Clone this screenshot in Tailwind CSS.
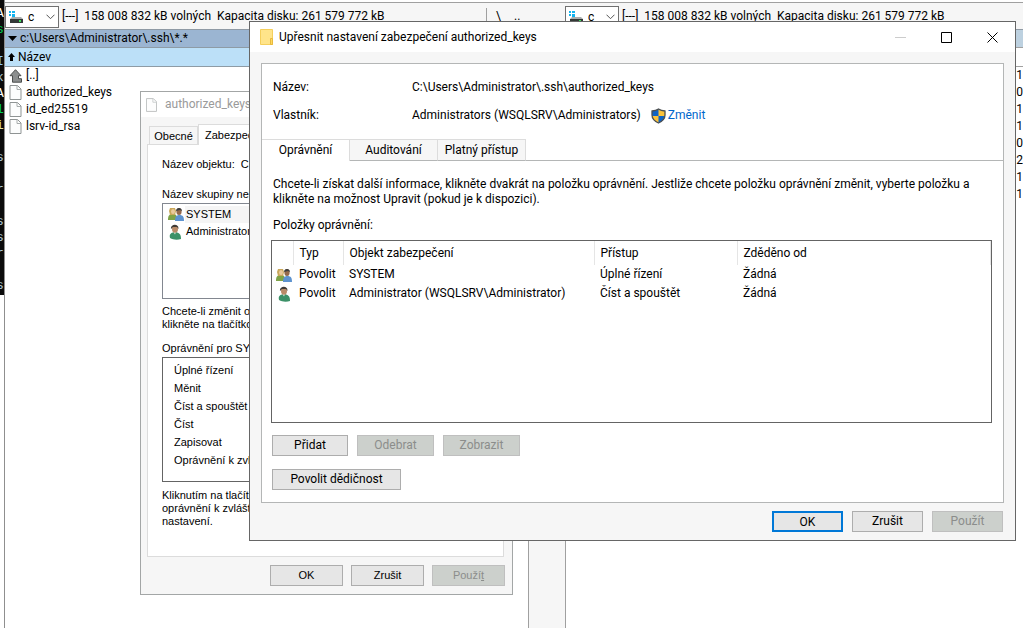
<!DOCTYPE html>
<html lang="cs">
<head>
  <meta charset="UTF-8" />
  <meta name="viewport" content="width=device-width, initial-scale=1.0"/>
  <title>Upřesnit nastavení zabezpečení authorized_keys</title>
  <script src="https://cdn.jsdelivr.net/npm/@tailwindcss/browser@4"></script>
</head>
<body class="relative flex h-screen overflow-hidden bg-white text-black text-[12px] leading-[17px] font-['Roboto','Open_Sans',sans-serif]">

  <svg class="hidden">
    <symbol id="drive" viewBox="0 0 16 14">
      <path fill="#12b4f0" d="M1 1h2v2H1zM4 1h3v2H4zM1 4h2v2H1zM4 4h3v3H4z"/>
      <path fill="#a9adad" d="M4 7h9l2 2H2z"/>
      <path fill="#333837" d="M2 9h13v4H2z"/>
      <path fill="#3fe05a" d="M11 10h2v2h-2z"/>
    </symbol>
    <symbol id="file" viewBox="0 0 12 15">
      <path fill="#fcfdfd" stroke="#8f9494" d="M.5.5h7.500l3.500 3.500v10.500H.5z"/>
      <path fill="none" stroke="#a8adad" d="M7.500.5v4h4"/>
    </symbol>
    <symbol id="group" viewBox="0 0 16 14">
      <path fill="#7fa348" d="M0 13c0-4 1-6 5-6s4 3 4 6z"/>
      <path fill="#c9a75a" d="M2 1h5l1 3-1 4H2L1 4z"/>
      <ellipse cx="5" cy="4.500" rx="2" ry="2.500" fill="#e9c99c"/>
      <path fill="#5e93cf" d="M7 14c0-4 1-6 4.500-6s4.500 2 4.500 6z"/>
      <ellipse cx="11" cy="4.500" rx="2.600" ry="3.500" fill="#94694c"/>
      <path fill="#3c3d3d" d="M8 4c0-4 6-4 6 0l-2-1z"/>
    </symbol>
    <symbol id="user" viewBox="0 0 13 16">
      <path fill="#3c9168" d="M1 14c-1-4 1-5 4-6 5 0 7 2 7 7-3 1-8 1-11-1z"/>
      <path fill="#e6efe6" d="M4.500 8h2.500L6 10.500z"/>
      <ellipse cx="6" cy="5" rx="3" ry="3.800" fill="#b98b68"/>
      <path fill="#3f3a35" d="M2 5C1 0 10-1 9.500 5L8 3 4 3z"/>
    </symbol>
  </svg>

  <!-- terminal edge -->
  <aside class="h-[295px] w-1 shrink-0 overflow-hidden bg-[#0b0b0b] pt-[6px]">
    <pre class="-ml-1 font-['Liberation_Mono',monospace] text-[13px] leading-[16px] text-[#a9c4d4]"><span class="text-white">A</span>
<span class="text-green-500">s</span>

<span class="text-[#8cc8ff]">I</span>
k
<span class="text-white">A</span>
<span class="text-green-500">1</span>
<span class="text-[#e0e0a0]">i</span>

s

r

s
s
r

s</pre>
  </aside>

  <!-- file manager -->
  <div class="flex min-w-0 flex-1 flex-col border-l border-[#8f8f8f]">
    <div class="mt-[7px] flex h-[22px] shrink-0 bg-[#f6f6f6] shadow-[0_-4px_0_#f6f6f6,0_-5px_0_#a0a0a0]">
      <div class="flex w-[560px] shrink-0 items-center gap-[3px]">
        <label class="relative -mt-[3px] block">
          <svg class="absolute left-[3px] top-1 h-[14px] w-4"><use href="#drive"/></svg>
          <select aria-label="Disk" class="h-[22px] w-[54px] appearance-none border border-[#707070] bg-white pl-[22px] leading-[20px]"><option>c</option></select>
          <svg class="absolute right-1 top-2 h-[6px] w-[9px]" viewBox="0 0 9 6"><path fill="none" stroke="#555" d="M.5.7l4 4 4-4"/></svg>
        </label>
        <span class="-mt-1 whitespace-pre">[---]  158 008 832 kB volných  Kapacita disku: 261 579 772 kB</span>
        <div class="-mt-1 ml-auto flex w-[79px] gap-2 border-l border-[#a0a0a0] pl-[9px]">
          <button class="w-[10px] text-left">\</button>
          <button>..</button>
        </div>
      </div>
      <div class="flex items-center gap-[3px]">
        <label class="relative -mt-[3px] block">
          <svg class="absolute left-[3px] top-1 h-[14px] w-4"><use href="#drive"/></svg>
          <select aria-label="Disk vpravo" class="h-[22px] w-[54px] appearance-none border border-[#707070] bg-white pl-[22px] leading-[20px]"><option>c</option></select>
          <svg class="absolute right-1 top-2 h-[6px] w-[9px]" viewBox="0 0 9 6"><path fill="none" stroke="#555" d="M.5.7l4 4 4-4"/></svg>
        </label>
        <span class="-mt-1 whitespace-pre">[---]  158 008 832 kB volných  Kapacita disku: 261 579 772 kB</span>
      </div>
    </div>

    <div class="flex min-h-0 flex-1">
      <section class="w-[523px] shrink-0">
        <div class="flex h-[18px] items-center gap-[3px] border-t border-[#8f9aa5] bg-[#9bb5d2] pl-[3px]">
          <svg class="h-[5px] w-[9px]" viewBox="0 0 9 5"><path d="M0 0h9L4.500 5z"/></svg>
          c:\Users\Administrator\.ssh\*.*
        </div>
        <div class="flex h-5 items-center gap-[3px] border-y border-[#8e9ba5] bg-[#bce0f8] pl-[3px]">
          <svg class="h-2 w-[7px]" viewBox="0 0 7 8"><path d="M3.500 0L7 4H5v4H2V4H0z"/></svg>
          Název
        </div>
        <ul class="pl-1">
          <li class="flex h-[17px] items-center gap-1">
            <svg class="h-[14px] w-[13px]" viewBox="0 0 13 14"><path fill="#8c8f8f" stroke="#4a4d4d" d="M6.500.7l5.500 6H9.500v3h3v3.500h-9V6.700H1z"/></svg>[..]
          </li>
          <li class="flex h-[17px] items-center gap-1"><svg class="h-[15px] w-[13px]"><use href="#file"/></svg>authorized_keys</li>
          <li class="flex h-[17px] items-center gap-1"><svg class="h-[15px] w-[13px]"><use href="#file"/></svg>id_ed25519</li>
          <li class="flex h-[17px] items-center gap-1"><svg class="h-[15px] w-[13px]"><use href="#file"/></svg>lsrv-id_rsa</li>
        </ul>
      </section>
      <div class="w-[38px] shrink-0 border-x border-[#a0a0a0] bg-[#f6f6f6]"></div>
      <section class="min-w-0 flex-1">
        <div class="h-[18px] border-t border-[#8f9aa5] bg-[#bdd1e0]"></div>
        <div class="h-5 border-y border-[#a0a0a0]"></div>
        <ul class="text-right">
          <li>1</li><li>0</li><li>1</li><li>1</li><li>0</li><li>2</li><li>1</li><li>1</li>
        </ul>
      </section>
    </div>
  </div>

  <!-- file properties window -->
  <div class="absolute left-[140px] top-[91px] w-[373px] border border-[#a3a6a6] bg-[#f6f6f6] font-['Liberation_Sans',sans-serif] text-[11px] leading-[13px]">
    <div class="flex h-[25px] items-center gap-2 bg-white pl-[5px] font-['Roboto','Open_Sans',sans-serif] text-[12px] text-[#9a9a9a]">
      <svg class="h-[14px] w-[11px] opacity-60"><use href="#file"/></svg>
      <span>authorized_keys</span>
    </div>
    <div class="px-2 pt-[7px]">
      <div class="-mb-px flex items-end">
        <button class="h-[19px] w-[49px] border border-b-0 border-[#dcdcdc] px-1">Obecné</button>
        <button class="relative h-[21px] border border-b-0 border-[#dcdcdc] bg-white px-[6px]">Zabezpečení</button>
      </div>
      <div class="-ml-[2px] h-[413px] w-[357px] overflow-hidden whitespace-nowrap border border-[#dcdcdc] bg-white px-[14px] pt-[13px]">
        <div class="flex gap-[6px]"><span>Název objektu:</span><span>C:</span></div>
        <div class="mt-[17px]">Název skupiny neb</div>
        <ul class="mt-[2px] h-[96px] border border-[#828790] pl-[5px] pt-px">
          <li class="flex h-[18px] items-center gap-px"><svg class="h-[14px] w-4"><use href="#group"/></svg><span class="flex-1 bg-[#f5f5f5] pl-px leading-[17px]">SYSTEM</span></li>
          <li class="flex h-[17px] items-center gap-1 pl-px"><svg class="h-4 w-[13px]"><use href="#user"/></svg>Administrator</li>
        </ul>
        <p class="mt-[6px]">Chcete-li změnit op<br>klikněte na tlačítko</p>
        <div class="mt-[11px]">Oprávnění pro SYS</div>
        <ul class="mt-[2px] h-[125px] border border-[#646464] pl-[11px] pt-[3px] leading-[18px]">
          <li>Úplné řízení</li>
          <li>Měnit</li>
          <li>Číst a spouštět</li>
          <li>Číst</li>
          <li>Zapisovat</li>
          <li>Oprávnění k zvl</li>
        </ul>
        <p class="mt-[7px]">Kliknutím na tlačítk<br>oprávnění k zvlášt<br>nastavení.</p>
      </div>
      <div class="-mr-px flex justify-end gap-2 py-2">
        <button class="h-[21px] w-[73px] border border-[#adadad] bg-[#e6e6e6]">OK</button>
        <button class="h-[21px] w-[73px] border border-[#adadad] bg-[#e6e6e6]">Zrušit</button>
        <button disabled class="h-[21px] w-[73px] border border-[#bfbfbf] bg-[#ccd0cc] text-[#8b8d8b]">Použí<u>t</u></button>
      </div>
    </div>
  </div>

  <!-- advanced security window -->
  <div class="absolute left-[249px] right-[7px] top-[21px] border border-[#666666] bg-[#f6f6f6]">
    <header class="flex h-[30px] items-center bg-white pl-[10px]">
      <svg class="mr-[6px] h-4 w-[13px]" viewBox="0 0 13 16"><path fill="#ffe48a" stroke="#f5cf5c" d="M.5.5h12v15H.5z"/><path fill="#ffd95e" stroke="#e8b93d" d="M10.500 9.500h2v6h-2z"/></svg>
      <h1 class="flex-1">Upřesnit nastavení zabezpečení authorized_keys</h1>
      <button disabled aria-label="Minimalizovat" class="flex w-[45px] justify-center"><svg class="size-[11px]" viewBox="0 0 11 11"><path stroke="#ccc" d="M0 5.500h11"/></svg></button>
      <button aria-label="Maximalizovat" class="flex w-[46px] justify-center"><svg class="size-[11px]" viewBox="0 0 11 11"><path fill="none" stroke="#000" d="M.5.5h10v10H.5z"/></svg></button>
      <button aria-label="Zavřít" class="flex w-[46px] justify-center"><svg class="size-[11px]" viewBox="0 0 11 11"><path stroke="#000" d="M.5.5l10 10M10.500.5l-10 10"/></svg></button>
    </header>
    <main class="mx-[11px] mt-[11px] border border-[#b4b6b6] bg-white pb-3">
      <dl class="grid grid-cols-[139px_1fr] gap-y-[11px] pl-[11px] pt-[15px]">
        <dt>Název:</dt>
        <dd>C:\Users\Administrator\.ssh\authorized_keys</dd>
        <dt>Vlastník:</dt>
        <dd class="flex items-center">Administrators (WSQLSRV\Administrators)
          <svg class="ml-[10px] mr-[2px] h-4 w-[15px]" viewBox="0 0 15 16">
            <path fill="#0f63c4" d="M7.500 1Q10 2.800 14 3v4q0 5-6.500 8Q1 12 1 7V3q4-.2 6.500-2z"/>
            <path fill="#fcc23a" d="M7.500 1Q10 2.800 14 3v5H7.500zM1 8h6.500v7Q2 12.500 1 8z"/>
            <path fill="none" stroke="#4b4f52" stroke-width="1.300" d="M7.500 1Q10 2.800 14 3v4q0 5-6.500 8Q1 12 1 7V3q4-.2 6.500-2z"/>
          </svg>
          <a href="#" class="text-[#0066cc]">Změnit</a>
        </dd>
      </dl>
      <nav class="mt-[15px] flex">
        <button class="h-[22px] w-[88px] border-r border-t border-[#dcdcdc]">Oprávnění</button>
        <button class="h-[22px] w-[88px] border-b border-r border-t border-[#dcdcdc] border-b-[#b4b6b6] bg-[#f6f6f6]">Auditování</button>
        <button class="h-[22px] w-[88px] border-b border-r border-t border-[#dcdcdc] border-b-[#b4b6b6] bg-[#f6f6f6]">Platný přístup</button>
        <div class="flex-1 border-b border-[#b4b6b6]"></div>
      </nav>
      <div class="pl-[10px] pr-[11px] pt-4">
        <p class="px-px leading-[15px]">Chcete-li získat další informace, klikněte dvakrát na položku oprávnění. Jestliže chcete položku oprávnění změnit, vyberte položku a<br>klikněte na možnost Upravit (pokud je k dispozici).</p>
        <h2 class="mt-[10px] px-px">Položky oprávnění:</h2>
        <div class="-ml-px mt-[6px] h-[183px] border border-[#646464]">
          <table class="w-full table-fixed text-left">
            <thead>
              <tr class="h-6 *:border-r *:border-[#e5e5e5] *:p-0 *:font-normal">
                <th class="w-[21px]"></th>
                <th class="w-[50px]"><span class="pl-[6px]">Typ</span></th>
                <th class="w-[251px]"><span class="pl-[6px]">Objekt zabezpečení</span></th>
                <th class="w-[143px]"><span class="pl-[6px]">Přístup</span></th>
                <th><span class="pl-[6px]">Zděděno od</span></th>
              </tr>
            </thead>
            <tbody>
              <tr class="h-[19px] *:p-0">
                <td><svg class="ml-1 h-[14px] w-4"><use href="#group"/></svg></td>
                <td><span class="pl-[6px]">Povolit</span></td>
                <td><span class="pl-[6px]">SYSTEM</span></td>
                <td><span class="pl-[6px]">Úplné řízení</span></td>
                <td><span class="pl-[6px]">Žádná</span></td>
              </tr>
              <tr class="h-[19px] *:p-0">
                <td><svg class="ml-[6px] h-4 w-[13px]"><use href="#user"/></svg></td>
                <td><span class="pl-[6px]">Povolit</span></td>
                <td><span class="pl-[6px]">Administrator (WSQLSRV\Administrator)</span></td>
                <td><span class="pl-[6px]">Číst a spouštět</span></td>
                <td><span class="pl-[6px]">Žádná</span></td>
              </tr>
            </tbody>
          </table>
        </div>
        <div class="mt-3 flex gap-[9px]">
          <button class="h-[21px] w-[76px] border border-[#adadad] bg-[#e6e6e6]">Přidat</button>
          <button disabled class="h-[21px] w-[77px] border border-[#bfbfbf] bg-[#ccd0cc] text-[#8b8d8b]">Odebrat</button>
          <button disabled class="h-[21px] w-[77px] border border-[#bfbfbf] bg-[#ccd0cc] text-[#8b8d8b]">Zobrazit</button>
        </div>
        <button class="mt-[13px] block h-[21px] w-[129px] border border-[#adadad] bg-[#e6e6e6]">Povolit dědičnost</button>
      </div>
    </main>
    <footer class="flex justify-end gap-[9px] px-3 py-2">
      <button class="h-[21px] w-[71px] border-2 border-[#0078d7] bg-[#e6e6e6] leading-[16px]">OK</button>
      <button class="h-[21px] w-[71px] border border-[#adadad] bg-[#e6e6e6]">Zrušit</button>
      <button disabled class="h-[21px] w-[71px] border border-[#bfbfbf] bg-[#ccd0cc] text-[#8b8d8b]">Použít</button>
    </footer>
  </div>
</body>
</html>
